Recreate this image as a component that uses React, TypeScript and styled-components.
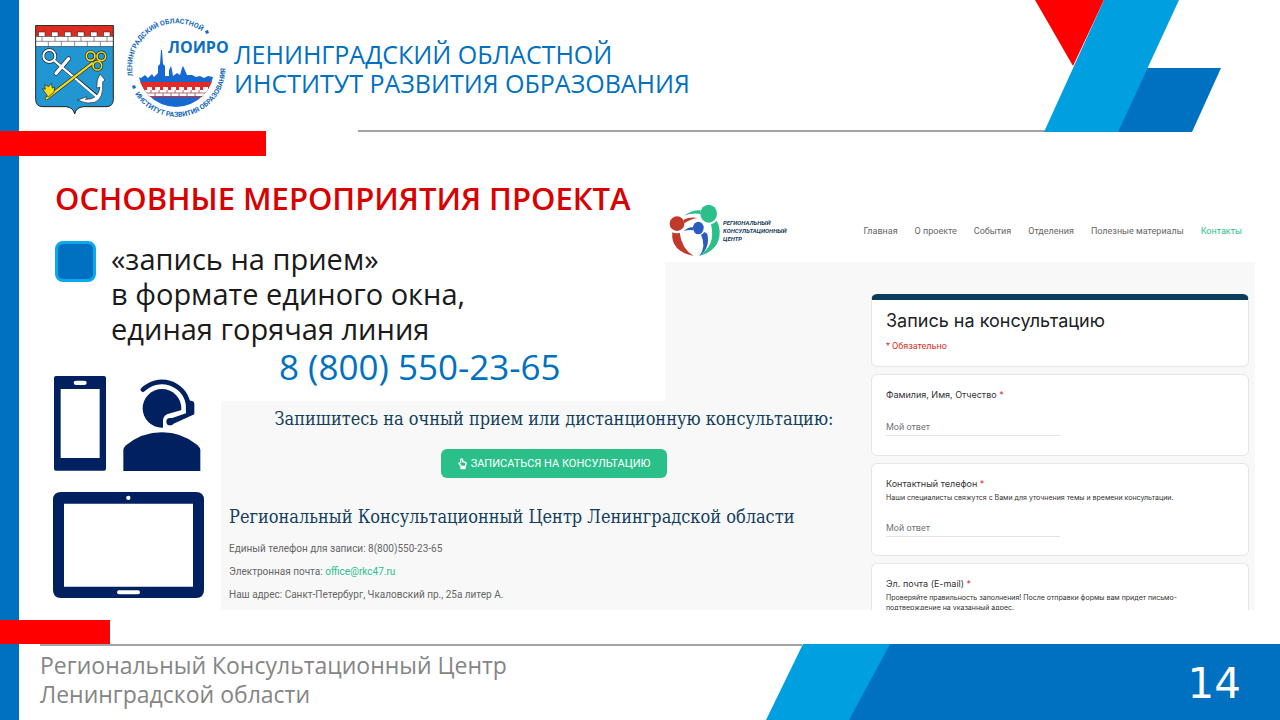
import React from "react";
import styled, { createGlobalStyle } from "styled-components";

const blue = "#0070c0";
const sky = "#00a0e0";
const red = "#ff0000";
const navy = "#00205f";
const green = "#2bbf8a";
const panelGrey = "#f8f8f8";
const ruleGrey = "#a3a3a3";

const GlobalStyle = createGlobalStyle`
  * { box-sizing: border-box; }
  body { margin: 0; background: #fff; }
  h1, h2, h3, p, ul { margin: 0; padding: 0; font-weight: 400; }
  ul { list-style: none; }
  svg { display: block; flex: none; }
`;

const Page = styled.div`
  display: flex;
  flex-direction: column;
  min-height: 100vh;
  overflow: hidden;
  background: linear-gradient(to right, ${blue} 19px, #fff 19px);
  font-family: "Open Sans", "Noto Sans", sans-serif;
`;

const Header = styled.header`
  display: flex;
  align-items: flex-start;
  padding-right: 59px;
  height: 131px;
`;

const HeaderMain = styled.div`
  flex: 1;
  min-width: 0;
`;

const Brand = styled.div`
  display: flex;
  align-items: flex-start;
  height: 130px;
  padding: 16px 0 0 35px;
`;

const Emblem = styled.div`
  padding-top: 9px;
  margin-right: 12px;
`;

const Institute = styled.h1`
  margin: 24px 0 0 4px;
  color: ${blue};
  font-size: 25px;
  line-height: 29px;
  white-space: nowrap;
`;

const HeaderRule = styled.div`
  height: 2px;
  margin: 0 -10px 0 358px;
  background: ${ruleGrey};
`;

const RedBar = styled.div<{ $width: number; $height: number }>`
  width: ${(p) => p.$width}px;
  height: ${(p) => p.$height}px;
  background: ${red};
`;

const Main = styled.main`
  flex: 1;
  display: grid;
  grid-template-columns: 221px minmax(0, 444fr) minmax(0, 206fr) minmax(0, 384fr);
  grid-template-rows: 192px 53px 209px;
  padding: 0 25px 10px 0;
`;

const Intro = styled.section`
  grid-area: 1 / 1 / 2 / 3;
  padding: 22px 0 0 55px;
`;

const Heading = styled.h2`
  color: #d90000;
  font-size: 31px;
  font-weight: 600;
  line-height: 40px;
  white-space: nowrap;
`;

const Bullet = styled.div`
  display: flex;
  gap: 15px;
  margin-top: 23px;
`;

const Marker = styled.span`
  flex: none;
  width: 41px;
  height: 41px;
  border: 3px solid #0aa8ec;
  border-radius: 8px;
  background: ${blue};
`;

const BulletText = styled.p`
  color: #1a1a1a;
  font-size: 29px;
  line-height: 35px;
  white-space: nowrap;
`;

const Hotline = styled.p`
  grid-area: 2 / 2 / 3 / 3;
  padding-left: 58px;
  color: ${blue};
  font-size: 35px;
  line-height: 38px;
  white-space: nowrap;
`;

const Devices = styled.div`
  grid-area: 2 / 1 / 4 / 2;
  display: flex;
  flex-direction: column;
  gap: 21px;
  padding: 28px 0 0 53px;
`;

const DeviceRow = styled.div`
  display: flex;
  align-items: flex-end;
  gap: 17px;
  padding-left: 1px;
`;

const Site = styled.section`
  grid-area: 1 / 3 / 4 / 5;
  display: grid;
  grid-template-columns: minmax(0, 206fr) minmax(0, 384fr);
  grid-template-rows: 106px 1fr;
  background: ${panelGrey};
  font-family: Roboto, sans-serif;
`;

const SiteHeader = styled.div`
  grid-column: 1 / 3;
  display: flex;
  align-items: center;
  justify-content: space-between;
  padding: 43px 13px 0 4px;
  background: #fff;
`;

const SiteBrand = styled.div`
  display: flex;
  align-items: center;
  gap: 2px;
  color: #16405b;
  font-size: 6px;
  font-weight: 700;
  font-style: italic;
  line-height: 8px;
`;

const SiteNav = styled.nav`
  display: flex;
  gap: 17px;
`;

const NavLink = styled.a<{ $active?: boolean }>`
  color: ${(p) => (p.$active ? green : "#666")};
  font-size: 9px;
  line-height: 12px;
  text-decoration: none;
  white-space: nowrap;
`;

const Form = styled.form`
  grid-column: 2;
  display: flex;
  flex-direction: column;
  gap: 7px;
  padding: 32px 6px 0 0;
`;

const Card = styled.div<{ $height: number; $cut?: boolean }>`
  height: ${(p) => p.$height}px;
  padding: 13px 14px 0;
  overflow: hidden;
  border: 1px solid #e6e6e6;
  border-bottom-width: ${(p) => (p.$cut ? 0 : 1)}px;
  border-radius: ${(p) => (p.$cut ? "6px 6px 0 0" : "6px")};
  background: #fff;
`;

const TitleCard = styled(Card)`
  padding-top: 7px;
  border-top: 6px solid #0d3d5c;
`;

const FormTitle = styled.h3`
  color: #202124;
  font-family: Inter, sans-serif;
  font-size: 18px;
  line-height: 28px;
`;

const Required = styled.p`
  margin-top: 5px;
  color: #d93025;
  font-size: 9px;
  line-height: 12px;
`;

const Label = styled.label`
  display: block;
  color: #333;
  font-family: Inter, sans-serif;
  font-size: 9px;
  line-height: 14px;
`;

const Star = styled.span`
  color: #d93025;
`;

const Hint = styled.p`
  margin: 2px 32px 0 0;
  color: #333;
  font-family: Inter, sans-serif;
  font-size: 7px;
  line-height: 10px;
`;

const Answer = styled.input`
  display: block;
  width: 50%;
  height: 18px;
  margin-top: 16px;
  padding: 0;
  border: 0;
  border-bottom: 1px solid #e4e4e4;
  background: none;
  font-family: Roboto, sans-serif;
  font-size: 9px;
  &::placeholder { color: #70757a; opacity: 1; }
`;

const Booking = styled.section`
  grid-area: 3 / 2 / 4 / 4;
  padding: 6px 0 0 8px;
  background: ${panelGrey};
  font-family: Roboto, sans-serif;
`;

const CallToAction = styled.div`
  display: flex;
  flex-direction: column;
  align-items: center;
  gap: 18px;
  padding-left: 8px;
`;

const SlabHeading = styled.h3`
  color: #133f5c;
  font-family: "DejaVu Serif Condensed", "DejaVu Serif", serif;
  font-size: 18px;
  line-height: 24px;
  white-space: nowrap;
`;

const BookButton = styled.button`
  display: flex;
  align-items: center;
  justify-content: center;
  gap: 4px;
  width: 226px;
  height: 29px;
  padding: 0;
  border: 0;
  border-radius: 6px;
  background: ${green};
  color: #fff;
  font-family: Roboto, sans-serif;
  font-size: 11px;
  font-weight: 400;
`;

const Contacts = styled.div`
  margin-top: 27px;
`;

const ContactList = styled.ul`
  margin-top: 8px;
  color: #666;
  font-size: 10px;
  line-height: 23px;
`;

const Mail = styled.a`
  color: ${green};
  text-decoration: none;
`;

const Footer = styled.footer`
  display: flex;
  height: 76px;
`;

const FooterText = styled.p`
  flex: 1;
  margin: 0 -36px 0 40px;
  padding-top: 5px;
  border-top: 2px solid ${ruleGrey};
  color: #858585;
  font-size: 23px;
  line-height: 29px;
  white-space: nowrap;
`;

const FooterShape = styled.div`
  width: 514px;
  padding-left: 83px;
  background: ${sky};
  clip-path: polygon(37px 0, 100% 0, 100% 100%, 0 100%);
`;

const PageNumber = styled.div`
  height: 100%;
  padding: 0 39px 0 0;
  background: ${blue};
  clip-path: polygon(41px 0, 100% 0, 100% 100%, 0 100%);
  color: #fff;
  font-family: "DejaVu Sans", sans-serif;
  font-size: 42px;
  line-height: 80px;
  text-align: right;
`;

const merlons = [116, 155, 194, 233, 272, 311];

const CoatOfArms = () => (
  <svg width="79" height="90" viewBox="105 75 237 270" aria-hidden="true">
    <clipPath id="shield">
      <path d="M107 76H340V298Q340 320 318 320H250Q228 322 224 342Q220 322 198 320H129Q107 320 107 298Z" />
    </clipPath>
    <g clipPath="url(#shield)">
      <rect x="105" y="75" width="237" height="270" fill="#2196d3" />
      <rect x="105" y="75" width="237" height="40" fill="#dc2c20" />
      <g fill="#fff" stroke="#222" strokeWidth="1.5">
        <rect x="105" y="109" width="237" height="30" />
        {merlons.map((x) => (
          <rect key={x} x={x} y="96" width="19" height="14" />
        ))}
        <path d="M105 124H342M126 110V124M165 110V124M204 110V124M243 110V124M282 110V124M321 110V124M145 124V139M184 124V139M224 124V139M262 124V139M301 124V139" />
      </g>
    </g>
    <g fill="none" strokeLinecap="round">
      <g stroke="#222" strokeWidth="10">
        <circle cx="148" cy="168" r="18" />
        <path d="M163 182L290 288" />
        <path d="M206 176L168 220" strokeWidth="14" />
      </g>
      <path d="M234 300L260 290Q262 295 256 298Q294 300 300 262L290 264L292 240L300 222L315 240L308 246Q312 296 284 307Q262 312 248 306Z" fill="#fff" stroke="#222" strokeWidth="2" />
      <g stroke="#fff">
        <circle cx="148" cy="168" r="18" strokeWidth="6" />
        <path d="M163 182L290 290" strokeWidth="7" />
        <path d="M206 176L168 220" strokeWidth="10" />
      </g>
      <g stroke="#222" strokeWidth="9">
        <path d="M276 190L140 295" strokeWidth="10" />
        <circle cx="272" cy="168" r="13" />
        <circle cx="304" cy="169" r="13" />
        <circle cx="292" cy="197" r="13" />
      </g>
      <g stroke="#f4dc1c" strokeWidth="5">
        <path d="M276 190L140 295" strokeWidth="7" />
        <circle cx="272" cy="168" r="13" />
        <circle cx="304" cy="169" r="13" />
        <circle cx="292" cy="197" r="13" />
      </g>
      <path d="M144 290L127 266L136 268L134 254L146 260L154 250L157 264L164 262L162 276Z" fill="#f4dc1c" stroke="#222" strokeWidth="2" />
    </g>
    <path d="M107 76H340V298Q340 320 318 320H250Q228 322 224 342Q220 322 198 320H129Q107 320 107 298Z" fill="none" stroke="#222" strokeWidth="3" />
  </svg>
);

const InstituteLogo = () => (
  <svg width="104" height="104" viewBox="126 16 104 104" role="img" aria-label="ЛОИРО">
    <defs>
      <path id="arcTop" d="M133 76A44 44 0 0 1 208 37" />
      <path id="arcBottom" d="M135 94A49 49 0 0 0 224 56" />
      <clipPath id="disc">
        <circle cx="176" cy="69" r="38" />
      </clipPath>
    </defs>
    <g clipPath="url(#disc)">
      <path
        d="M136 76L141 78L145 75L148 78L152 74L154 77L158 73V66L160 64L161 50L162 50L163 64L165 66V76L169 76V70L171 66L172 70L173 76L177 73L180 75L182 68L183 66L184 68L187 75L192 75L196 77L200 76L204 78L208 76L213 77V110H136Z"
        fill="#1769d2"
      />
      <rect x="136" y="82" width="80" height="15" fill="#e32b24" />
      <g fill="#fff">
        {[147, 155, 163, 171, 179, 187, 195, 203].map((x) => (
          <rect key={x} x={x} y="87" width="5" height="4" />
        ))}
        <rect x="143" y="90" width="65" height="6" />
      </g>
      <path
        d="M143 93H208M151 90V93M159 90V93M167 90V93M175 90V93M183 90V93M191 90V93M199 90V93M155 93V96M163 93V96M171 93V96M179 93V96M187 93V96M195 93V96"
        fill="none"
        stroke="#8a3340"
        strokeWidth="0.7"
      />
    </g>
    <g fill="#1769c0" fontFamily="Roboto, sans-serif" fontWeight="700" fontSize="7">
      <text>
        <textPath href="#arcTop">ЛЕНИНГРАДСКИЙ ОБЛАСТНОЙ</textPath>
      </text>
      <text>
        <textPath href="#arcBottom">ИНСТИТУТ РАЗВИТИЯ ОБРАЗОВАНИЯ</textPath>
      </text>
    </g>
    <path d="M205 31L208 30L209 33L206 34ZM132 86L135 85L136 88L133 89Z" fill="#1769d2" />
    <text x="168" y="53" fill="#0b6fc4" fontFamily="Open Sans, sans-serif" fontWeight="700" fontSize="16">
      ЛОИРО
    </text>
  </svg>
);

const HeaderShapes = () => (
  <svg width="186" height="132" viewBox="1035 0 186 132" aria-hidden="true">
    <path d="M1035 0H1104L1073 66Z" fill={red} />
    <path d="M1147 68H1221L1192 132H1117Z" fill={blue} />
    <path d="M1104 0H1179L1118 132H1044Z" fill={sky} />
  </svg>
);

const PhoneIcon = () => (
  <svg width="52" height="95" viewBox="73 48 156 285" aria-hidden="true">
    <path
      fillRule="evenodd"
      fill={navy}
      d="M79 48H223Q229 48 229 54V326Q229 332 223 332H79Q73 332 73 326V54Q73 48 79 48ZM93 87V294H210V87ZM139 62Q132 62 132 68.500Q132 75 139 75H164Q171 75 171 68.500Q171 62 164 62Z"
    />
  </svg>
);

const OperatorIcon = () => (
  <svg width="78" height="92" viewBox="278 56 234 276" aria-hidden="true">
    <circle cx="395" cy="144" r="58" fill={navy} />
    <path d="M398 206V180Q399 166 412 161L462 147L472 212Z" fill="#fff" />
    <path d="M338 88A80 80 0 0 1 473 128" fill="none" stroke={navy} strokeWidth="14" strokeLinecap="round" />
    <path d="M466 118L486 122Q492 124 492 130V162L423 193L415 177L467 159Z" fill={navy} />
    <circle cx="419" cy="184" r="11" fill={navy} />
    <path d="M279 332V270Q279 262 287 255Q335 216 395 216Q455 216 501 254Q510 262 510 270V332Z" fill={navy} />
  </svg>
);

const TabletIcon = () => (
  <svg width="151" height="106" viewBox="69 397 453 318" aria-hidden="true">
    <path
      fillRule="evenodd"
      fill={navy}
      d="M93 397H498Q522 397 522 421V691Q522 715 498 715H93Q69 715 69 691V421Q69 397 93 397ZM102 432V681H489V432ZM295 408A6.500 6.500 0 0 0 295 421A6.500 6.500 0 0 0 295 408ZM267 692Q261 692 261 698Q261 704 267 704H324Q330 704 330 698Q330 692 324 692Z"
    />
  </svg>
);

const PointerIcon = () => (
  <svg width="9" height="12" viewBox="0 0 27 36" aria-hidden="true">
    <path
      d="M9 23L3 17Q3 13 8 14V6Q8 3 11 3Q14 3 14 6V11L22 13Q25 14 24 18L22 25H9Z"
      fill="none"
      stroke="#fff"
      strokeWidth="4"
      strokeLinejoin="round"
    />
    <rect x="7" y="25" width="16" height="9" rx="2" fill="#fff" />
  </svg>
);

const CentreLogo = () => (
  <svg width="52" height="53" viewBox="42 42 156 159" aria-hidden="true">
    <g fill="#c0392b">
      <circle cx="66" cy="101" r="22" />
      <path d="M88 100Q104 88 127 84Q104 80 86 89Z" />
      <path d="M52 127Q46 184 116 198Q80 176 74 128Q62 132 52 127Z" />
    </g>
    <g fill="#2bbf8a">
      <ellipse cx="161" cy="71" rx="25" ry="27" />
      <path d="M88 77Q110 60 137 61L137 72Q110 68 88 77Z" />
      <path d="M168 103Q184 168 130 198Q196 182 194 122Q193 104 185 92Q178 100 168 103Z" />
    </g>
    <g fill="#2a5cbf">
      <ellipse cx="130" cy="114" rx="16" ry="19" />
      <path d="M86 124Q100 110 114 112L114 121Q100 118 86 124Z" />
      <path d="M138 134Q154 168 134 197Q166 174 157 132Q152 126 147 127Q144 132 138 134Z" />
    </g>
  </svg>
);

const navItems = ["Главная", "О проекте", "События", "Отделения", "Полезные материалы", "Контакты"];

export default function App() {
  return (
    <Page>
      <GlobalStyle />
      <Header>
        <HeaderMain>
          <Brand>
            <Emblem>
              <CoatOfArms />
            </Emblem>
            <InstituteLogo />
            <Institute>
              ЛЕНИНГРАДСКИЙ ОБЛАСТНОЙ
              <br />
              ИНСТИТУТ РАЗВИТИЯ ОБРАЗОВАНИЯ
            </Institute>
          </Brand>
          <HeaderRule />
        </HeaderMain>
        <HeaderShapes />
      </Header>
      <RedBar $width={266} $height={25} />

      <Main>
        <Intro>
          <Heading>ОСНОВНЫЕ МЕРОПРИЯТИЯ ПРОЕКТА</Heading>
          <Bullet>
            <Marker />
            <BulletText>
              «запись на прием»
              <br />в формате единого окна,
              <br />
              единая горячая линия
            </BulletText>
          </Bullet>
        </Intro>
        <Hotline>8 (800) 550-23-65</Hotline>
        <Devices>
          <DeviceRow>
            <PhoneIcon />
            <OperatorIcon />
          </DeviceRow>
          <TabletIcon />
        </Devices>

        <Site>
          <SiteHeader>
            <SiteBrand>
              <CentreLogo />
              <span>
                РЕГИОНАЛЬНЫЙ
                <br />
                КОНСУЛЬТАЦИОННЫЙ
                <br />
                ЦЕНТР
              </span>
            </SiteBrand>
            <SiteNav>
              {navItems.map((item) => (
                <NavLink key={item} href="#" $active={item === "Контакты"}>
                  {item}
                </NavLink>
              ))}
            </SiteNav>
          </SiteHeader>
          <Form>
            <TitleCard $height={73}>
              <FormTitle>Запись на консультацию</FormTitle>
              <Required>* Обязательно</Required>
            </TitleCard>
            <Card $height={82}>
              <Label htmlFor="name">
                Фамилия, Имя, Отчество <Star>*</Star>
              </Label>
              <Answer id="name" placeholder="Мой ответ" />
            </Card>
            <Card $height={93}>
              <Label htmlFor="phone">
                Контактный телефон <Star>*</Star>
              </Label>
              <Hint>Наши специалисты свяжутся с Вами для уточнения темы и времени консультации.</Hint>
              <Answer id="phone" placeholder="Мой ответ" />
            </Card>
            <Card $height={47} $cut>
              <Label as="p">
                Эл. почта (E-mail) <Star>*</Star>
              </Label>
              <Hint>
                Проверяйте правильность заполнения! После отправки формы вам придет письмо-подтверждение на указанный
                адрес.
              </Hint>
            </Card>
          </Form>
        </Site>

        <Booking>
          <CallToAction>
            <SlabHeading>Запишитесь на очный прием или дистанционную консультацию:</SlabHeading>
            <BookButton type="button">
              <PointerIcon />
              ЗАПИСАТЬСЯ НА КОНСУЛЬТАЦИЮ
            </BookButton>
          </CallToAction>
          <Contacts>
            <SlabHeading>Региональный Консультационный Центр Ленинградской области</SlabHeading>
            <ContactList>
              <li>Единый телефон для записи: 8(800)550-23-65</li>
              <li>
                Электронная почта: <Mail href="mailto:office@rkc47.ru">office@rkc47.ru</Mail>
              </li>
              <li>Наш адрес: Санкт-Петербург, Чкаловский пр., 25а литер А.</li>
            </ContactList>
          </Contacts>
        </Booking>
      </Main>

      <RedBar $width={110} $height={24} />
      <Footer>
        <FooterText>
          Региональный Консультационный Центр
          <br />
          Ленинградской области
        </FooterText>
        <FooterShape>
          <PageNumber>14</PageNumber>
        </FooterShape>
      </Footer>
    </Page>
  );
}
